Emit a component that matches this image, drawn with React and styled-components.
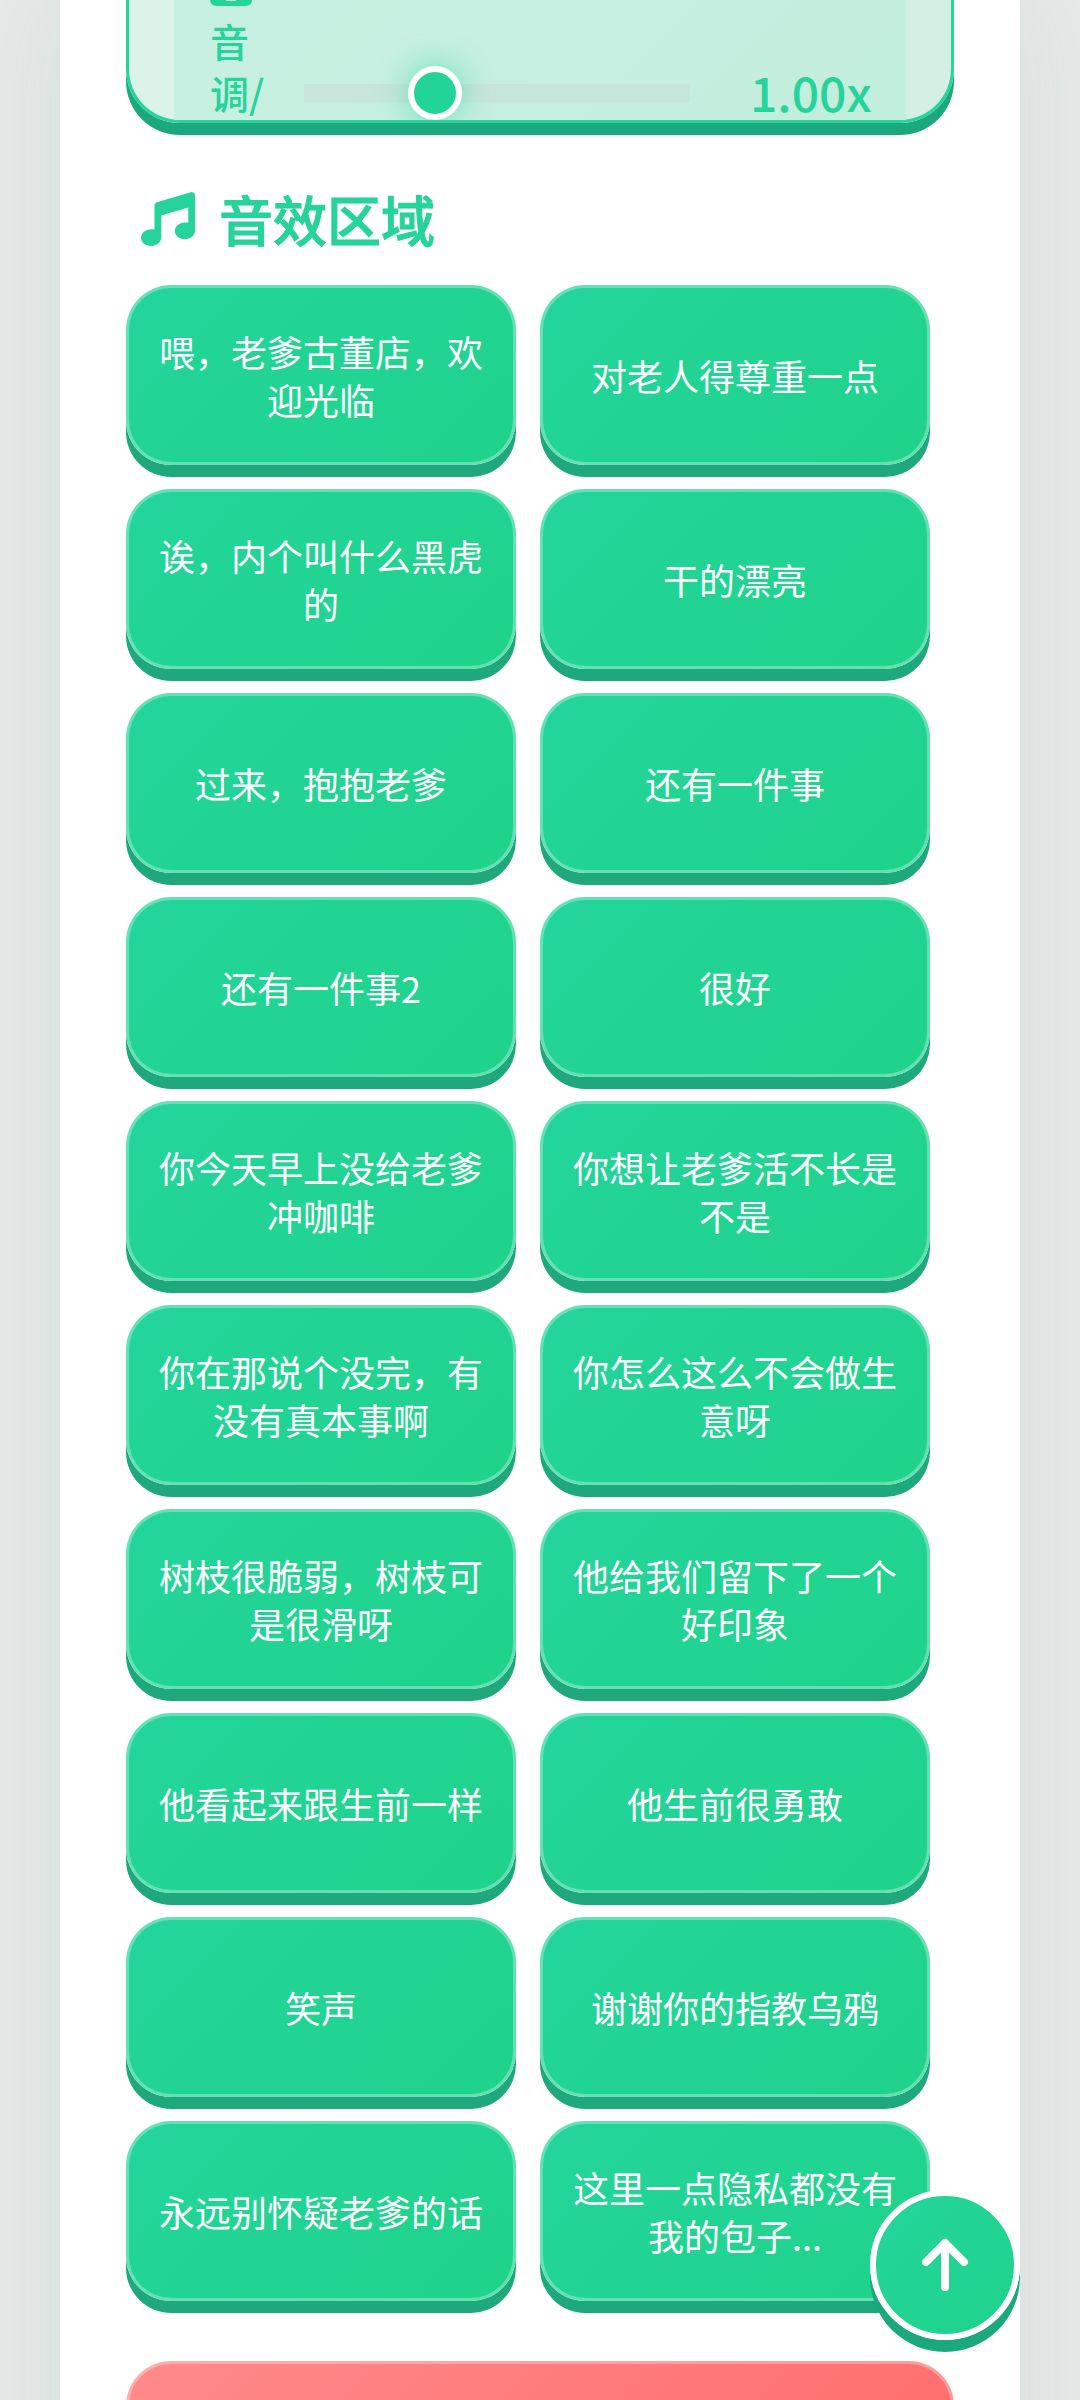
import React, { useState } from 'react';
import styled, { createGlobalStyle } from 'styled-components';
import { FaMusic } from 'react-icons/fa6';

const GlobalStyle = createGlobalStyle`
  *, *::before, *::after { box-sizing: border-box; }
  body {
    margin: 0;
    background: #e8e8e8;
    font-family: "Noto Sans CJK SC", "Noto Sans", sans-serif;
  }
  button, input { font: inherit; }
`;

const Viewport = styled.div`
  height: 100vh;
  overflow: hidden;
  padding: 0 60px;
`;

const Sheet = styled.main`
  min-height: 100%;
  padding: 0 66px;
  background: #fff;
  box-shadow: 0 0 90px rgba(33, 190, 140, 0.12);
`;

const Panel = styled.section`
  height: 123px;
  padding: 0 45px;
  overflow: hidden;
  border: 3px solid #26d39a;
  border-top: 0;
  border-radius: 0 0 54px 54px;
  background: linear-gradient(90deg, #dcf3ea, #d4efe4);
  box-shadow: 0 12px 0 #1ba87c;
`;

const PitchRow = styled.div`
  display: flex;
  align-items: flex-end;
  gap: 48px;
  height: 120px;
  padding: 0 24px 0 36px;
  background: linear-gradient(135deg, #c8f0e2, #c2eede);
`;

const PitchLabel = styled.label`
  display: flex;
  flex-direction: column;
  width: 46px;
  padding-bottom: 2px;
  color: #26d39a;
  font-size: 39px;
  font-weight: 500;
  line-height: 52px;
`;

const LabelIcon = styled.svg`
  width: 42px;
  height: 42px;
  margin-bottom: 8px;
`;

const Slider = styled.input`
  appearance: none;
  flex: 1;
  min-width: 0;
  height: 54px;
  margin: 0;
  background: transparent;

  &::-webkit-slider-runnable-track {
    height: 18px;
    background: #c8e5db;
  }
  &::-webkit-slider-thumb {
    appearance: none;
    width: 54px;
    height: 54px;
    margin-top: -18px;
    border: 6px solid #fff;
    border-radius: 50%;
    background: #22d497;
    box-shadow: 0 0 30px rgba(33, 212, 151, 0.6);
  }
`;

const PitchValue = styled.output`
  width: 144px;
  padding: 0 0 2px 12px;
  color: #26d39a;
  font-size: 48px;
  font-weight: 500;
  line-height: 54px;
`;

const Heading = styled.h2`
  display: flex;
  align-items: center;
  gap: 24px;
  margin: 56px 0 26px;
  padding-left: 15px;
  color: #26d39a;
  font-size: 54px;
  font-weight: 500;
  line-height: 80px;
  -webkit-text-stroke: 1px currentColor;
`;

const SoundGrid = styled.div`
  display: grid;
  grid-template-columns: repeat(2, minmax(0, 1fr));
  gap: 24px;
  padding-right: 24px;
`;

const SoundButton = styled.button`
  height: 180px;
  padding: 0 24px;
  border: 3px solid rgba(255, 255, 255, 0.3);
  border-radius: 45px;
  background: linear-gradient(135deg, #23d59b, #1fd38a) border-box;
  box-shadow: 0 12px 0 #1fa87c;
  color: #fff;
  font-size: 36px;
  font-weight: 400;
  line-height: 48px;
  text-align: center;
`;

const StopButton = styled(SoundButton)`
  width: 100%;
  margin-top: 60px;
  background: linear-gradient(135deg, #ff8a8a, #ff6b6b) border-box;
  box-shadow: 0 12px 0 #d95050;
`;

const TopButton = styled.button`
  position: fixed;
  right: 60px;
  bottom: 60px;
  display: flex;
  align-items: center;
  justify-content: center;
  width: 150px;
  height: 150px;
  padding: 0;
  border: 6px solid #fff;
  border-radius: 50%;
  background: linear-gradient(135deg, #23d59b, #1fd38a);
  box-shadow: 0 12px 0 #1ba87c;
  color: #fff;
`;

const sounds = [
  '喂，老爹古董店，欢迎光临',
  '对老人得尊重一点',
  '诶，内个叫什么黑虎的',
  '干的漂亮',
  '过来，抱抱老爹',
  '还有一件事',
  '还有一件事2',
  '很好',
  '你今天早上没给老爹冲咖啡',
  '你想让老爹活不长是不是',
  '你在那说个没完，有没有真本事啊',
  '你怎么这么不会做生意呀',
  '树枝很脆弱，树枝可是很滑呀',
  '他给我们留下了一个好印象',
  '他看起来跟生前一样',
  '他生前很勇敢',
  '笑声',
  '谢谢你的指教乌鸦',
  '永远别怀疑老爹的话',
  '这里一点隐私都没有我的包子...',
];

export default function App() {
  const [pitch, setPitch] = useState(1);
  return (
    <Viewport>
      <GlobalStyle />
      <Sheet>
        <Panel>
          <PitchRow>
            <PitchLabel htmlFor="pitch">
              <LabelIcon viewBox="0 0 42 42" aria-hidden="true">
                <path fill="currentColor" d="M6 0h30a6 6 0 0 1 6 6v30a6 6 0 0 1-6 6H6a6 6 0 0 1-6-6V6a6 6 0 0 1 6-6zM16 26v11h10V26z" fillRule="evenodd" />
              </LabelIcon>
              <span>音</span>
              <span>调/</span>
            </PitchLabel>
            <Slider
              id="pitch"
              type="range"
              min="0.5"
              max="2.1"
              step="0.01"
              value={pitch}
              onChange={(e) => setPitch(Number(e.target.value))}
            />
            <PitchValue htmlFor="pitch">{pitch.toFixed(2)}x</PitchValue>
          </PitchRow>
        </Panel>
        <Heading>
          <FaMusic aria-hidden="true" />
          音效区域
        </Heading>
        <SoundGrid>
          {sounds.map((name) => (
            <SoundButton key={name} type="button">{name}</SoundButton>
          ))}
        </SoundGrid>
        <StopButton type="button" aria-label="停止" />
      </Sheet>
      <TopButton type="button" aria-label="返回顶部" onClick={() => window.scrollTo({ top: 0 })}>
        <svg width="60" height="60" viewBox="0 0 60 60" fill="none" stroke="currentColor" strokeWidth="8" strokeLinecap="round" strokeLinejoin="round" aria-hidden="true">
          <path d="M30 52V8M11 27 30 8l19 19" />
        </svg>
      </TopButton>
    </Viewport>
  );
}
